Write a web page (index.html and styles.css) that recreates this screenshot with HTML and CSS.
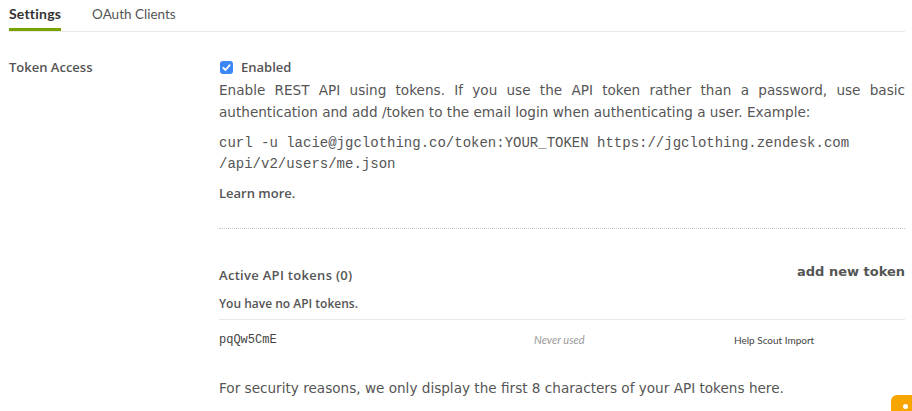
FILE: index.html
```html
<!DOCTYPE html>
<html lang="en">
<head>
<meta charset="utf-8">
<title>API Settings</title>
<link rel="stylesheet" href="styles.css">
</head>
<body>
<nav class="tabs">
  <a class="tab tab-active">Settings</a>
  <a class="tab">OAuth Clients</a>
</nav>
<section class="setting">
  <div class="setting-label">Token Access</div>
  <div class="setting-body">
    <label class="check-row">
      <span class="checkbox"><svg viewBox="0 0 13 13" width="13" height="13"><path d="M3.3 6.8 L5.5 9 L9.7 4.2" fill="none" stroke="#fff" stroke-width="1.8" stroke-linecap="round" stroke-linejoin="round"/></svg></span>
      <span class="check-text">Enabled</span>
    </label>
    <p class="desc">Enable REST API using tokens. If you use the API token rather than a password, use basic authentication and add /token to the email login when authenticating a user. Example:</p>
    <p class="code">curl -u lacie@jgclothing.co/token:YOUR_TOKEN https://jgclothing.zendesk.com<br>/api/v2/users/me.json</p>
    <a class="learn">Learn more.</a>
    <div class="dotted"></div>
    <div class="tokens-head">
      <span class="tokens-title">Active API tokens (0)</span>
      <a class="add-token">add new token</a>
    </div>
    <div class="no-tokens">You have no API tokens.</div>
    <div class="token-row">
      <span class="token-id">pqQw5CmE</span>
      <span class="token-used">Never used</span>
      <span class="token-name">Help Scout Import</span>
    </div>
    <p class="note">For security reasons, we only display the first 8 characters of your API tokens here.</p>
  </div>
</section>
<div class="widget"><span class="widget-dot"></span></div>
</body>
</html>
```

FILE: styles.css
```css
html, body {
  margin: 0;
  padding: 0;
  background: #fff;
}
body {
  padding: 0 7px 0 9px;
  color: #555;
  font-family: "Lato", "Noto Sans", sans-serif;
  overflow: hidden;
  height: 411px;
}
.tabs {
  display: flex;
  gap: 31px;
  border-bottom: 1px solid #e9e9e9;
  height: 31px;
}
.tab {
  display: block;
  font-size: 13.5px;
  line-height: 18px;
  padding: 5px 0 6px;
  color: #555;
  border-bottom: 3px solid transparent;
}
.tab-active {
  font-size: 14px;
  font-weight: 700;
  color: #333;
  letter-spacing: 0.2px;
  border-bottom-color: #78a300;
}
.setting {
  display: grid;
  grid-template-columns: 210px 1fr;
  padding-top: 25px;
}
.setting-label {
  font-family: "Open Sans", sans-serif;
  font-size: 13px;
  font-weight: 600;
  line-height: 20px;
  color: #555;
}
.check-row {
  display: flex;
  align-items: center;
  gap: 8px;
  height: 20px;
  padding-left: 1px;
}
.checkbox {
  width: 13px;
  height: 13px;
  border-radius: 3px;
  background: #3b87f5;
  display: flex;
}
.check-text {
  font-family: "Open Sans", sans-serif;
  font-size: 13px;
  font-weight: 600;
  color: #555;
}
.desc {
  margin: 2px 0 0;
  font-family: "DejaVu Sans", sans-serif;
  font-size: 13.6px;
  line-height: 22px;
  text-align: justify;
  color: #555;
}
.code {
  margin: 10px 0 0;
  font-family: "Liberation Mono", monospace;
  font-size: 14px;
  line-height: 21px;
  color: #555;
}
.learn {
  display: block;
  margin-top: 9px;
  font-family: "Open Sans", sans-serif;
  font-size: 13px;
  font-weight: 600;
  line-height: 18px;
  color: #555;
}
.dotted {
  margin-top: 26px;
  border-top: 1px dotted #c8c8c8;
}
.tokens-head {
  display: flex;
  justify-content: space-between;
  align-items: flex-start;
  margin-top: 36px;
  height: 20px;
}
.tokens-title {
  font-family: "Open Sans", sans-serif;
  font-size: 13px;
  font-weight: 600;
  letter-spacing: 0.3px;
  line-height: 20px;
}
.add-token {
  font-family: "DejaVu Sans", sans-serif;
  font-size: 13px;
  font-weight: 700;
  line-height: 14px;
  color: #555;
}
.no-tokens {
  margin-top: 10px;
  font-family: "Open Sans", sans-serif;
  font-size: 12px;
  font-weight: 600;
  line-height: 18px;
  padding-bottom: 6px;
  border-bottom: 1px solid #e9e9e9;
}
.token-row {
  display: grid;
  grid-template-columns: 315px 200px 1fr;
  align-items: center;
  padding: 11px 0 10px;
  line-height: 18px;
}
.token-id {
  font-family: "Liberation Mono", monospace;
  font-size: 12px;
  color: #444;
}
.token-used {
  font-size: 11px;
  font-style: italic;
  color: #999;
}
.token-name {
  font-size: 10px;
  color: #444;
}
.note {
  margin: 18px 0 0;
  font-family: "DejaVu Sans", sans-serif;
  font-size: 13.6px;
  line-height: 22px;
  color: #555;
}
.widget {
  position: fixed;
  right: 0;
  bottom: 0;
  width: 21px;
  height: 16px;
  background: #f8a500;
  border-top-left-radius: 6px;
}
.widget-dot {
  position: absolute;
  left: 12px;
  top: 9px;
  width: 5px;
  height: 5px;
  border-radius: 50%;
  background: #fff;
}
```
